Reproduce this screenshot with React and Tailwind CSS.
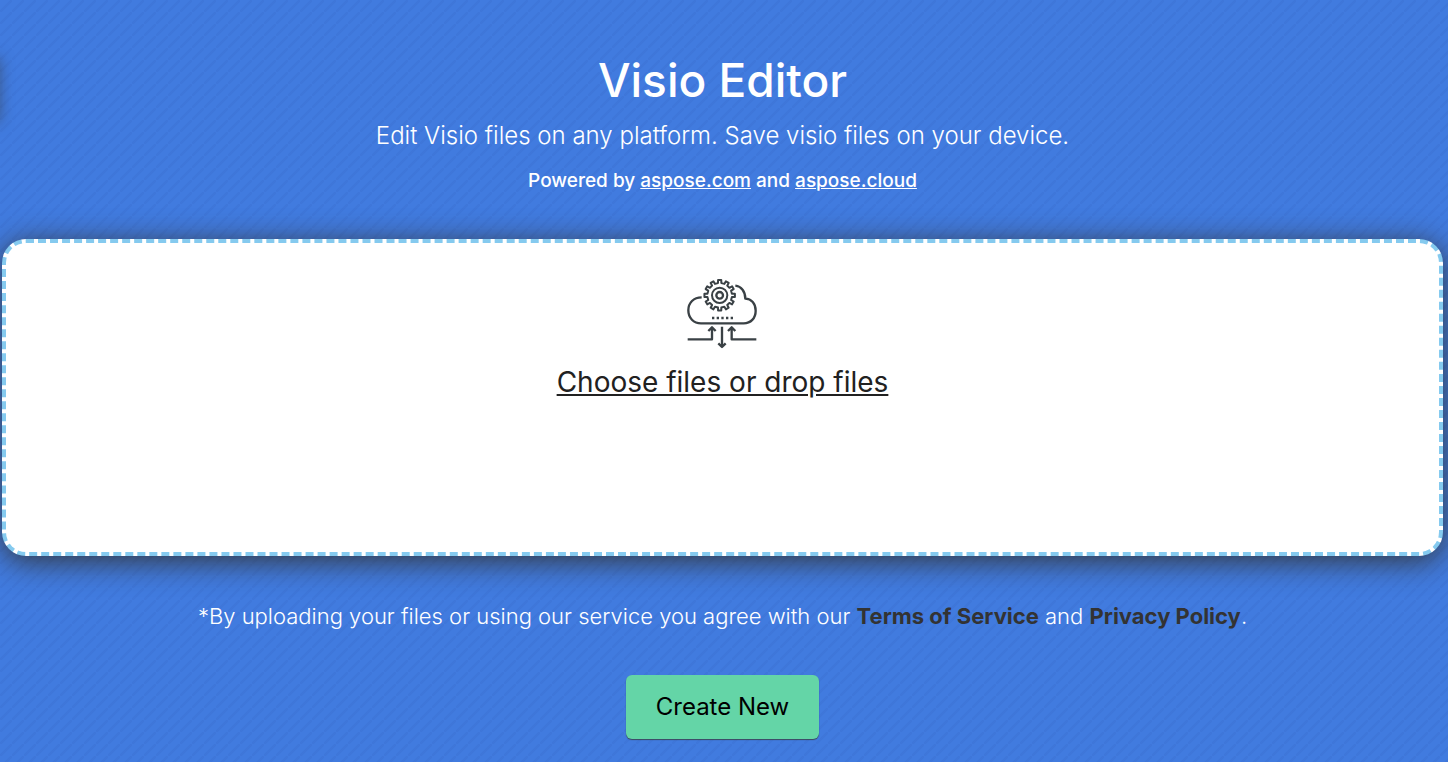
const GEAR_TEETH = 12

// outline of the cog: each tooth has two outer and two inner corners
function gearPoints(cx, cy, inner, outer) {
  const step = (Math.PI * 2) / GEAR_TEETH
  const points = []
  for (let i = 0; i < GEAR_TEETH; i++) {
    const a = i * step - Math.PI / 2
    const corners = [
      [inner, -0.26],
      [outer, -0.2],
      [outer, 0.2],
      [inner, 0.26],
    ]
    corners.forEach(([r, offset]) => {
      const angle = a + offset * step
      points.push(`${(cx + r * Math.cos(angle)).toFixed(1)},${(cy + r * Math.sin(angle)).toFixed(1)}`)
    })
  }
  return points.join(' ')
}

function CloudIcon() {
  return (
    <svg
      className="w-[70px] h-[70px]"
      viewBox="53 42 210 210"
      fill="none"
      stroke="#3a4145"
      strokeWidth="7"
      strokeLinejoin="round"
      overflow="visible"
      aria-hidden="true"
    >
      <polygon points={gearPoints(148, 91, 37, 46)} strokeWidth="6" />
      <circle cx="148" cy="91" r="23" strokeWidth="6" />
      <circle cx="148" cy="91" r="10" />
      <path d="M94 97C70 97 54 113 54 136C54 159 70 175 92 175H220C241 175 256 160 256 137C256 115 243 102 225 101C225 79 213 64 195 62" />
      <path d="M125 159H188" strokeDasharray="7 7" />
      <path d="M52 223H125V190M114 198L125 187L136 198" />
      <path d="M258 223H184V190M173 198L184 187L195 198" />
      <path d="M155 185V244M144 235L155 246L166 235" />
    </svg>
  )
}

export default function App() {
  return (
    <div className="relative min-h-screen overflow-hidden bg-[#417bdf] bg-[linear-gradient(135deg,transparent_38%,#3f77da_46%,#3f77da_54%,transparent_62%)] bg-[length:12px_12px] font-['Inter','Liberation_Sans',sans-serif] text-white">
      {/* edge of the collapsed side panel */}
      <div className="absolute top-[58px] right-full h-16 w-10 shadow-[0_0_14px_rgba(51,51,51,0.5)]" />

      <main className="flex flex-col items-center pl-[2px] pr-[5px] pt-[52px] pb-6 text-center">
        <h1 className="text-[46px] leading-[56px] font-medium">Visio Editor</h1>
        <h2 className="mt-2 text-[24px] leading-[40px] font-light">
          Edit Visio files on any platform. Save visio files on your device.
        </h2>
        <p className="mt-3 text-[19px] leading-[26px] font-medium">
          Powered by <a href="#com" className="underline">aspose.com</a> and{' '}
          <a href="#cloud" className="underline">aspose.cloud</a>
        </p>

        <div className="mt-[45px] flex h-[317px] w-full flex-col items-center rounded-[24px] border-4 border-dashed border-[#85caef] bg-white pt-9 shadow-[0_5px_30px_rgba(51,51,51,0.95)]">
          <CloudIcon />
          <label htmlFor="files" className="mt-3 cursor-pointer text-[28px] leading-[42px] text-[#212121] underline">
            Choose files or drop files
          </label>
          <input id="files" type="file" multiple className="sr-only" />
        </div>

        <p className="mt-[42px] text-[22px] leading-[36px] font-light">
          *By uploading your files or using our service you agree with our{' '}
          <a href="#terms" className="font-bold text-[#333333]">Terms of Service</a> and{' '}
          <a href="#privacy" className="font-bold text-[#333333]">Privacy Policy</a>.
        </p>

        <button
          type="button"
          className="mt-[41px] h-16 w-[193px] rounded-md bg-[#64d5a7] text-[24px] text-black shadow-[0_1px_1px_rgba(60,60,60,0.8)]"
        >
          Create New
        </button>
      </main>
    </div>
  )
}
